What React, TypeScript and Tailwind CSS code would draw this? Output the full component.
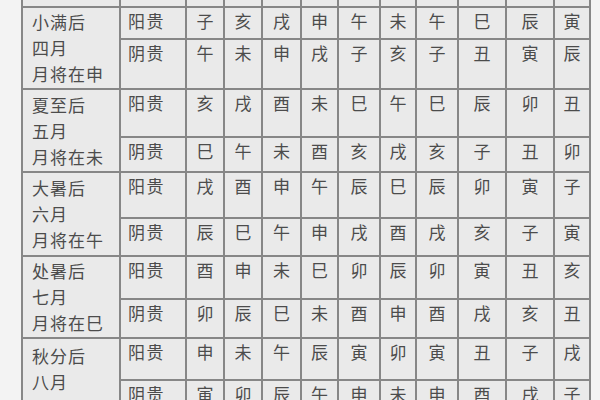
const groups = [
  {
    label: ['小满后', '四月', '月将在申'],
    yang: ['子', '亥', '戌', '申', '午', '未', '午', '巳', '辰', '寅'],
    yin: ['午', '未', '申', '戌', '子', '亥', '子', '丑', '寅', '辰'],
    h: [32, 50],
  },
  {
    label: ['夏至后', '五月', '月将在未'],
    yang: ['亥', '戌', '酉', '未', '巳', '午', '巳', '辰', '卯', '丑'],
    yin: ['巳', '午', '未', '酉', '亥', '戌', '亥', '子', '丑', '卯'],
    h: [48, 35],
  },
  {
    label: ['大暑后', '六月', '月将在午'],
    yang: ['戌', '酉', '申', '午', '辰', '巳', '辰', '卯', '寅', '子'],
    yin: ['辰', '巳', '午', '申', '戌', '酉', '戌', '亥', '子', '寅'],
    h: [46, 38],
  },
  {
    label: ['处暑后', '七月', '月将在巳'],
    yang: ['酉', '申', '未', '巳', '卯', '辰', '卯', '寅', '丑', '亥'],
    yin: ['卯', '辰', '巳', '未', '酉', '申', '酉', '戌', '亥', '丑'],
    h: [43, 39],
  },
  {
    label: ['秋分后', '八月', '月将在辰'],
    yang: ['申', '未', '午', '辰', '寅', '卯', '寅', '丑', '子', '戌'],
    yin: ['寅', '卯', '辰', '午', '申', '未', '申', '酉', '戌', '子'],
    h: [42, 45],
  },
]

const colWidths = [98, 66, 38, 38, 39, 37, 42, 36, 42, 48, 48, 36]

const cell = 'border-2 border-[#878787] bg-[#eaeaea] align-top pt-[2px] leading-[22px]'

export default function App() {
  return (
    <div
      className="w-[600px] h-[400px] overflow-hidden bg-[#f3f3f3] pl-[21px] text-[#4c4c4c] text-[17px]"
      style={{ fontFamily: '"Noto Sans CJK SC", "Noto Sans", sans-serif' }}
    >
      <table className="table-fixed border-collapse w-[570px] mt-[-14px]">
        <colgroup>
          {colWidths.map((w, i) => (
            <col key={i} style={{ width: w }} />
          ))}
        </colgroup>
        <tbody>
          {/* row cut off above the picture */}
          <tr className="h-[20px]">
            {colWidths.map((_, i) => (
              <td key={i} className="border-2 border-[#878787] bg-[#eaeaea]" />
            ))}
          </tr>
          {groups.map((g, gi) => (
            <>
              <tr key={gi + 'a'} style={{ height: g.h[0] }}>
                <td rowSpan={2} className="border-2 border-[#878787] bg-[#eaeaea] align-middle pl-[9px] leading-[26px] tracking-[1px]">
                  {g.label.map((l) => (
                    <div key={l}>{l}</div>
                  ))}
                </td>
                <td className={`${cell} pl-[7px] tracking-[1.5px]`}>阳贵</td>
                {g.yang.map((c, i) => (
                  <td key={i} className={`${cell} text-center`}>{c}</td>
                ))}
              </tr>
              <tr key={gi + 'b'} style={{ height: g.h[1] }}>
                <td className={`${cell} pl-[7px] tracking-[1.5px]`}>阴贵</td>
                {g.yin.map((c, i) => (
                  <td key={i} className={`${cell} text-center`}>{c}</td>
                ))}
              </tr>
            </>
          ))}
        </tbody>
      </table>
    </div>
  )
}
